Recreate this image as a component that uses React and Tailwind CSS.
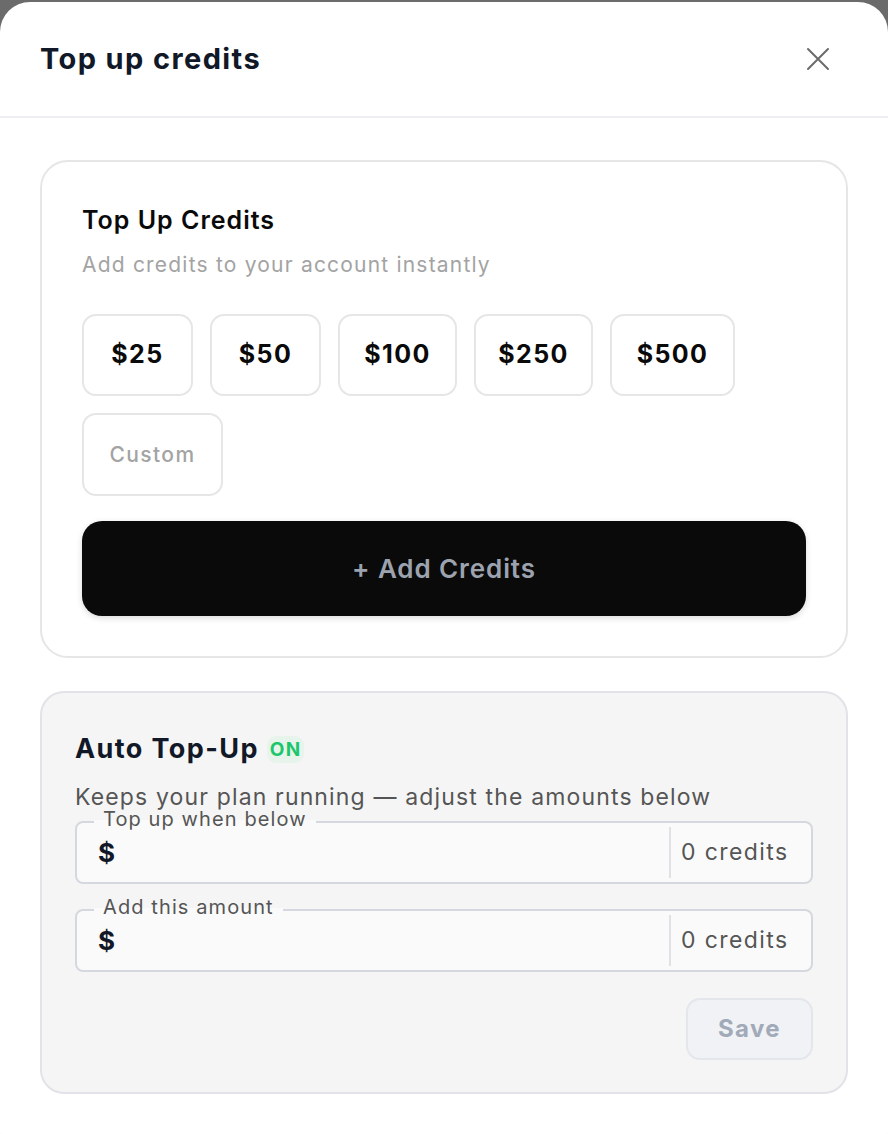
import React from "react";

const amounts = [
  { v: "$25", w: "w-[111px]" },
  { v: "$50", w: "w-[111px]" },
  { v: "$100", w: "w-[119px]" },
  { v: "$250", w: "w-[119px]" },
  { v: "$500", w: "w-[125px]" },
];

function AmountField({ label }) {
  return (
    <div className="relative h-[63px] rounded-[8px] border-2 border-[#d6d8e0] bg-[#fafafa] flex items-center">
      <span className="absolute -top-[13px] left-[17px] px-[9px] text-[20px] leading-[18px] tracking-[1.1px] text-[#555] bg-[linear-gradient(to_bottom,transparent_56%,#fafafa_56%)]">
        {label}
      </span>
      <div className="flex-1 pl-[21px] text-[26px] font-bold text-[#111827] leading-none">$</div>
      <div className="self-stretch my-[4px] w-[2px] bg-[#e2e2e6]" />
      <div className="w-[140px] pl-[10px] text-[23px] tracking-[1.4px] text-[#555]">0 credits</div>
    </div>
  );
}

export default function App() {
  return (
    <div
      className="w-[888px] h-[1134px] overflow-hidden bg-[#6b6b6b] pt-[2px]"
      style={{ fontFamily: "Inter, 'Noto Sans', sans-serif" }}
    >
      <div className="h-[1160px] bg-white rounded-[30px]">
        <div className="h-[116px] border-b-2 border-[#eeeef2] flex items-center justify-between pl-[40px] pr-[58px]">
          <h1 className="text-[29px] font-bold text-[#111827] tracking-[1.4px]">Top up credits</h1>
          <svg width="24" height="24" viewBox="0 0 24 24" fill="none" stroke="#6b6b6b" strokeWidth="2" strokeLinecap="round">
            <path d="M2 2 L22 22 M22 2 L2 22" />
          </svg>
        </div>

        <div className="px-[40px] pt-[42px] flex flex-col gap-[33px]">
          <div className="rounded-[28px] border-2 border-[#e6e6e6] bg-white px-[40px] pt-[42px] pb-[40px]">
            <div className="text-[25px] leading-[32px] font-semibold tracking-[1px] text-[#0a0a0a]">Top Up Credits</div>
            <div className="mt-[15px] text-[21px] leading-[28px] tracking-[1.2px] text-[#a3a3a3]">Add credits to your account instantly</div>
            <div className="mt-[35px] flex flex-wrap gap-[17px] w-[680px]">
              {amounts.map((a) => (
                <div
                  key={a.v}
                  className={`${a.w} h-[82px] rounded-[14px] border-2 border-[#e6e6e6] flex items-center justify-center text-[25px] font-bold tracking-[1.4px] text-[#0a0a0a]`}
                >
                  {a.v}
                </div>
              ))}
              <div className="h-[83px] w-[141px] rounded-[14px] border-2 border-[#e6e6e6] flex items-center justify-center text-[21px] font-medium tracking-[1.4px] text-[#a3a3a3]">
                Custom
              </div>
            </div>
            <div className="mt-[25px] h-[95px] rounded-[20px] bg-[#0a0a0a] shadow-[0_2px_6px_rgba(0,0,0,0.15)] flex items-center justify-center text-[26px] font-semibold tracking-[0.9px] text-[#9ca3af]">
              + Add Credits
            </div>
          </div>

          <div className="rounded-[24px] border-2 border-[#e2e2e8] bg-[#f5f5f5] px-[33px] pt-[39px] pb-[32px]">
            <div className="flex items-center gap-[8px]">
              <span className="text-[27px] leading-[34px] font-bold tracking-[1.4px] text-[#111827]">Auto Top-Up</span>
              <span className="rounded-[9px] bg-[#e6f4ec] px-[3px] text-[19px] leading-[27px] font-bold tracking-[1.2px] text-[#1ec66b]">ON</span>
            </div>
            <div className="mt-[18px] text-[23px] leading-[26px] tracking-[1.15px] text-[#555]">
              Keeps your plan running — adjust the amounts below
            </div>
            <div className="mt-[11px] flex flex-col gap-[25px]">
              <AmountField label="Top up when below" />
              <AmountField label="Add this amount" />
            </div>
            <div className="mt-[26px] flex justify-end">
              <div className="h-[62px] w-[127px] rounded-[14px] border-2 border-[#e3e6eb] bg-[#f0f2f5] flex items-center justify-center text-[24px] font-bold tracking-[1.4px] text-[#a0aab8]">
                Save
              </div>
            </div>
          </div>
        </div>
      </div>
    </div>
  );
}
